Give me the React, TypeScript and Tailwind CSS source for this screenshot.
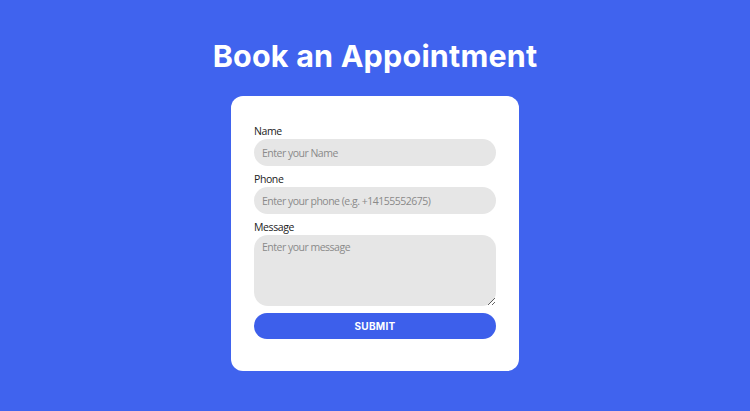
import React from 'react';

const fields = [
  { label: 'Name', placeholder: 'Enter your Name' },
  { label: 'Phone', placeholder: 'Enter your phone (e.g. +14155552675)' }
];

const App: React.FC = () => (
  <section className="w-full min-h-[411px] bg-[#4063ee] flex flex-col items-center pt-[36px]" style={{ fontFamily: '"Open Sans", sans-serif' }}>
    <h1 className="text-[30.5px] leading-[40px] font-bold text-white tracking-[0.2px]" style={{ fontFamily: 'Inter, sans-serif' }}>
      Book an Appointment
    </h1>
    <form className="mt-[20px] w-[288px] bg-white rounded-[12px] px-[23px] pt-[28px] pb-[32px] flex flex-col">
      {fields.map((f) => (
        <div key={f.label} className="flex flex-col mb-[6px]">
          <label className="text-[10.5px] leading-[14px] tracking-[-0.4px] text-[#222] mb-[1px]">{f.label}</label>
          <input
            placeholder={f.placeholder}
            className="h-[27px] rounded-full bg-[#e6e6e6] px-[8px] text-[10.5px] tracking-[-0.5px] text-[#333] placeholder:text-[#8a8a8a] outline-none"
          />
        </div>
      ))}
      <div className="flex flex-col">
        <label className="text-[10.5px] leading-[14px] tracking-[-0.4px] text-[#222] mb-[1px]">Message</label>
        <textarea
          placeholder="Enter your message"
          className="h-[71px] rounded-[14px] bg-[#e6e6e6] px-[8px] py-[5px] text-[10.5px] tracking-[-0.5px] text-[#333] placeholder:text-[#8a8a8a] outline-none"
        />
      </div>
      <button
        type="button"
        className="mt-[7px] h-[26px] rounded-full bg-[#3d5feb] text-white text-[10px] font-bold tracking-[0.3px]"
        style={{ fontFamily: 'Inter, sans-serif' }}
      >
        SUBMIT
      </button>
    </form>
  </section>
);

export default App;
